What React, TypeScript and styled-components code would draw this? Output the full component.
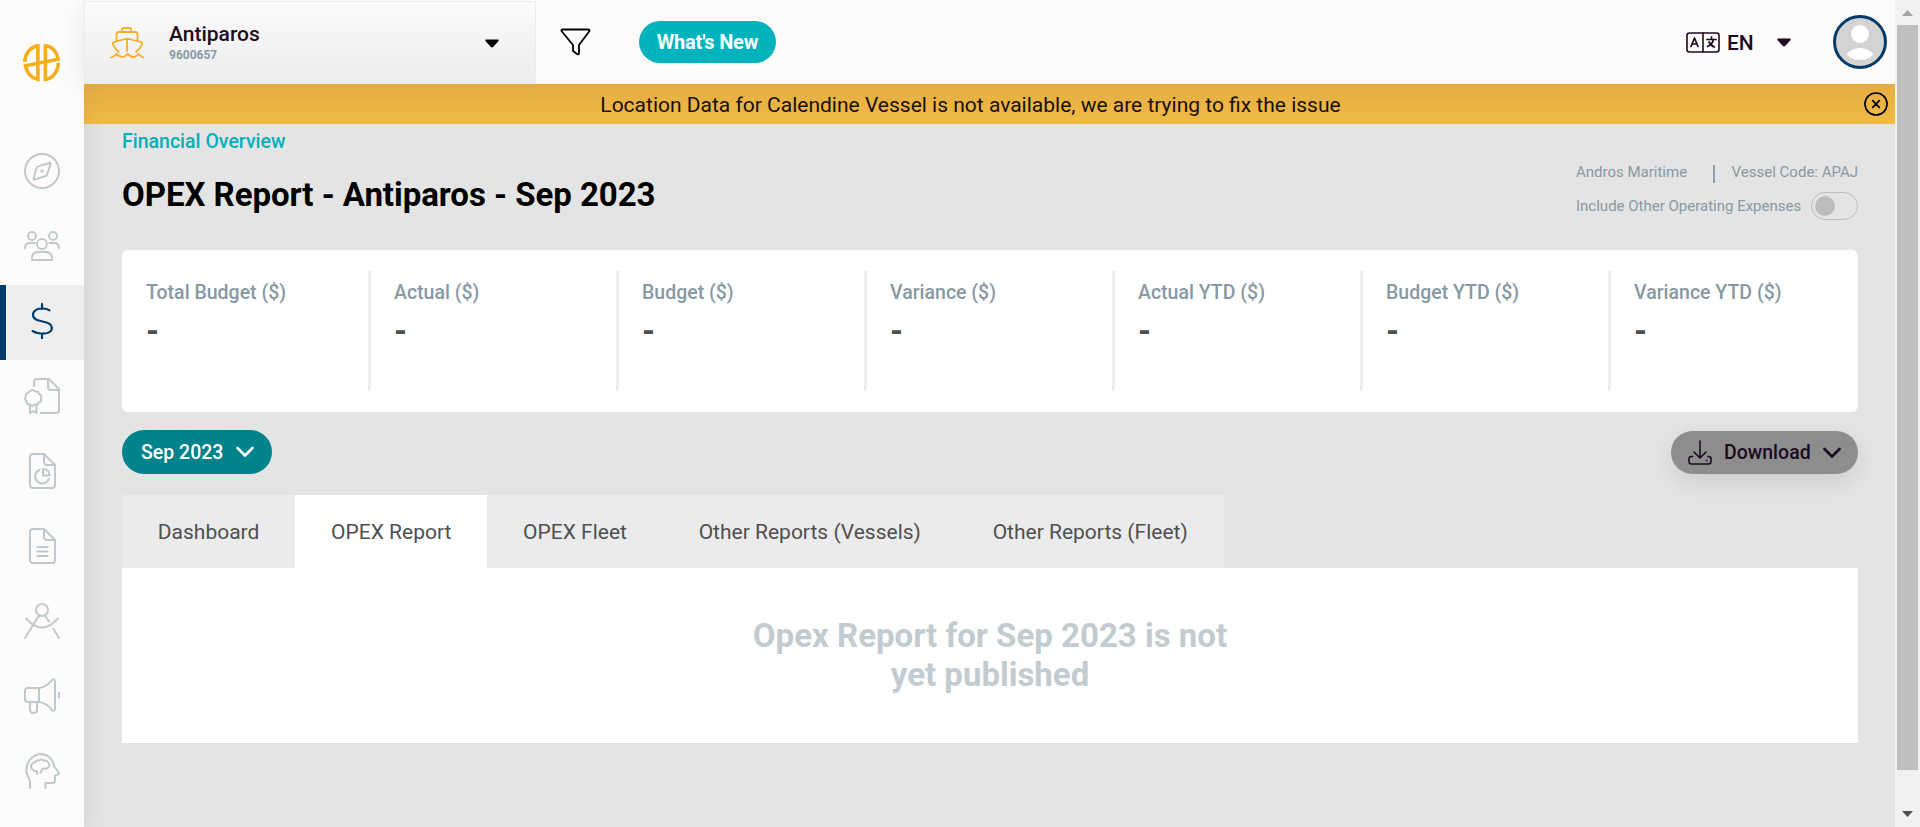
import React from 'react';
import styled, { createGlobalStyle } from 'styled-components';

const GlobalStyle = createGlobalStyle`
  *, *::before, *::after { box-sizing: border-box; }
  body { margin: 0; background: #e4e4e4; overflow: hidden; }
  body, button { font-family: Roboto, "Liberation Sans", sans-serif; }
  button { border: 0; padding: 0; background: none; cursor: pointer; white-space: nowrap; }
  h1, h2, p { margin: 0; }
  svg { display: block; flex: none; }
`;

const Shell = styled.div`
  display: grid;
  grid-template-columns: 84px minmax(0, 1fr) 25px;
  height: 100vh;
  overflow: hidden;
`;

const Sidebar = styled.nav`
  position: relative;
  z-index: 2;
  background: #fefcfa;
  box-shadow: 0 0 24px rgba(0, 0, 0, 0.1);
`;

const LogoLink = styled.div`
  display: flex;
  padding: 44px 0 0 23px;
  height: 135px;
`;

const NavItem = styled.div<{ $active?: boolean }>`
  display: flex;
  height: 75px;
  padding: ${(p) => (p.$active ? '18px 0 0 18px' : '18px 0 0 24px')};
  border-left: ${(p) => (p.$active ? '6px solid #003a69' : '0')};
  background: ${(p) => (p.$active ? '#eeeeee' : 'transparent')};
  color: ${(p) => (p.$active ? '#003a69' : '#bfc8cc')};
`;

const Page = styled.div`
  display: flex;
  flex-direction: column;
  min-width: 0;
`;

const Header = styled.header`
  position: relative;
  z-index: 3;
  display: flex;
  align-items: center;
  height: 84px;
  background: #fefcfa;
  box-shadow: 0 4px 24px rgba(0, 0, 0, 0.09);
  clip-path: inset(0 0 -40px -26px);
`;

const VesselSelect = styled.div`
  display: flex;
  align-items: center;
  align-self: flex-end;
  width: 452px;
  height: 83px;
  padding: 0 36px 0 25px;
  border: 1px solid #ebebeb;
  border-bottom: 0;
  background: linear-gradient(#fbfbfb, #ececec);
`;

const VesselText = styled.div`
  flex: 1;
  padding: 0 0 0 24px;
`;

const VesselName = styled.div`
  font-size: 21px;
  line-height: 23px;
  font-weight: 500;
  color: #1c0a22;
`;

const VesselNumber = styled.div`
  margin-top: 1px;
  font-size: 12px;
  line-height: 16px;
  font-weight: 700;
  color: #8799a3;
`;

const FilterButton = styled.button`
  margin-left: 24px;
`;

const NewsButton = styled.button`
  width: 137px;
  height: 42px;
  margin-left: 48px;
  border-radius: 21px;
  background: #00b3bd;
  color: #fff;
  font-size: 20px;
  font-weight: 700;
  letter-spacing: -0.2px;
`;

const Language = styled.div`
  display: flex;
  align-items: center;
  margin-left: auto;
  color: #1c0a22;
  font-size: 21px;
  font-weight: 500;
`;

const LanguageCode = styled.span`
  width: 50px;
  margin-left: 7px;
  padding-top: 1px;
`;

const Avatar = styled.div`
  width: 54px;
  height: 54px;
  margin: 0 8px 0 42px;
  border: 3px solid #003a69;
  border-radius: 50%;
  overflow: hidden;
  background: #d3d3d3;
`;

const Banner = styled.div`
  position: relative;
  z-index: 4;
  display: flex;
  align-items: center;
  height: 40px;
  flex: none;
  padding: 0 7px 0 31px;
  background:
    linear-gradient(90deg, rgba(0, 0, 0, 0.03), transparent 22px),
    linear-gradient(#e3ad41, #edb545 60%, #f1ba46);
`;

const BannerText = styled.p`
  flex: 1;
  padding: 1px 38px 0 0;
  text-align: center;
  font-size: 21px;
  color: #16110a;
`;

const Content = styled.main`
  padding: 0 37px 0 38px;
`;

const Breadcrumb = styled.p`
  padding-top: 6px;
  font-size: 19.5px;
  line-height: 24px;
  color: #00b0b9;
  font-weight: 500;
`;

const TitleRow = styled.div`
  display: flex;
  justify-content: space-between;
  height: 96px;
`;

const Title = styled.h1`
  padding-top: 21px;
  font-size: 33px;
  line-height: 40px;
  font-weight: 700;
  letter-spacing: -0.04px;
  color: #000;
`;

const Meta = styled.div`
  width: 282px;
  padding-top: 7px;
  color: #8799a3;
  font-size: 15px;
`;

const MetaRow = styled.div`
  display: flex;
  align-items: center;
  justify-content: space-between;
  height: 22px;
  white-space: nowrap;
`;

const MetaSeparator = styled.span`
  width: 2px;
  height: 18px;
  margin: 3px -9px 0 0;
  background: #8da0ac;
`;

const ToggleRow = styled(MetaRow)`
  height: 28px;
  margin-top: 9px;
`;

const Toggle = styled.span`
  display: flex;
  align-items: center;
  width: 47px;
  height: 28px;
  padding-left: 3px;
  border: 1px solid #bdbdbd;
  border-radius: 14px;
`;

const Knob = styled.span`
  width: 20px;
  height: 20px;
  border-radius: 50%;
  background: #bdbdbd;
`;

const Summary = styled.section`
  display: flex;
  height: 162px;
  padding: 21px 0 21px 1px;
  border-radius: 6px;
  background: #fff;
`;

const Metric = styled.div`
  flex: 0 0 248px;
  padding: 10px 0 0 23px;
  border-right: 3px solid #eeeeee;
  &:last-child { flex: 1; border-right: 0; }
`;

const MetricLabel = styled.div`
  font-size: 19.5px;
  line-height: 24px;
  font-weight: 500;
  color: #8799a3;
`;

const MetricValue = styled.div`
  margin-top: 7px;
  font-size: 33px;
  line-height: 38px;
  font-weight: 700;
  color: #4f4f4f;
`;

const Actions = styled.div`
  display: flex;
  justify-content: space-between;
  padding-top: 18px;
  height: 83px;
`;

const MonthButton = styled.button`
  display: flex;
  align-items: center;
  justify-content: space-between;
  width: 150px;
  height: 44px;
  padding: 0 18px 0 19px;
  border-radius: 22px;
  background: #00838a;
  color: #fff;
  font-size: 19.5px;
  font-weight: 500;
`;

const DownloadButton = styled.button`
  display: flex;
  align-items: center;
  width: 187px;
  height: 43px;
  margin-top: 1px;
  padding: 0 17px 0 17px;
  border-radius: 22px;
  background: #8d8d8d;
  box-shadow: 0 8px 24px rgba(0, 0, 0, 0.1);
  color: #1c0a22;
  font-size: 19.5px;
  font-weight: 500;
`;

const DownloadLabel = styled.span`
  flex: 1;
  padding-left: 12px;
  text-align: left;
`;

const Tabs = styled.div`
  display: flex;
  width: max-content;
  height: 73px;
`;

const Tab = styled.button<{ $active?: boolean }>`
  padding: 0 35.9px 0 35.8px;
  background: ${(p) => (p.$active ? '#fff' : '#ebebeb')};
  color: #4f4f4f;
  font-size: 21px;
`;

const Panel = styled.section`
  display: flex;
  justify-content: center;
  height: 175px;
  padding-top: 48px;
  background: #fff;
`;

const EmptyMessage = styled.h2`
  width: 500px;
  text-align: center;
  font-size: 33px;
  line-height: 39px;
  font-weight: 700;
  color: #c2cbd0;
`;

const ScrollTrack = styled.div`
  position: relative;
  z-index: 3;
  display: flex;
  flex-direction: column;
  align-items: center;
  padding: 10px 0 10px;
  background: #f1f1f1;
`;

const ScrollThumb = styled.div`
  width: 21px;
  height: 745px;
  margin: 9px 0 41px;
  background: #bfbfbf;
`;

const Line = ({ children, w = 36, h = 36, sw = 2 }: { children: React.ReactNode; w?: number; h?: number; sw?: number }) => (
  <svg width={w} height={h} viewBox={`0 0 ${w} ${h}`} fill="none" stroke="currentColor" strokeWidth={sw} strokeLinecap="round" strokeLinejoin="round">
    {children}
  </svg>
);

const Logo = () => (
  <svg width="38" height="38" viewBox="0 0 38 38" fill="none" stroke="#f6ae1e" strokeWidth="3.6">
    <path d="M1.800 18C2 10 7 3 14.900 1.900V35.500C9 34 4 29 2.400 21.800L35.200 15.200C34 8 29.500 2.600 22.400 1.900V35.500C29.500 34.500 35 28 35.300 18.800" />
  </svg>
);

const Compass = () => (
  <Line>
    <circle cx="18" cy="18" r="17" />
    <path d="M26.200 9.800 14 13.400q-1 .3-1.400 1.400L9.700 25.400q-.3 1.500 1.200 1L21.700 23q1-.4 1.400-1.400l3.300-10.300q.4-1.400-.2-1.500Z" />
    <circle cx="18" cy="18" r=".8" fill="currentColor" />
  </Line>
);

const People = () => (
  <Line sw={1.8}>
    <circle cx="8" cy="8" r="4" />
    <circle cx="29" cy="8" r="4" />
    <circle cx="18" cy="16" r="5" />
    <path d="M1 20.500v-.7Q1 15 6 15h5M35 20.500v-.7Q35 15 30 15h-4.500M8 32v-2.500Q8 24 15 24h6q7 0 7 5.500V32Z" />
  </Line>
);

const Dollar = () => (
  <Line sw={2.1}>
    <path d="M18 1v5M18 31v4.500M25.500 7.300C22 5.300 16 4.800 12.500 6.700 7.500 9.300 8 15 13 17l9.500 2.400c6.500 2 7 8 2 10.200-4.500 2-12 1-16-1.600" />
  </Line>
);

const Certificate = () => (
  <Line>
    <path d="M10 8V4q0-3 3-3h12l10 10v21q0 3-3 3H17M24 1v8q0 3 3 3h8" />
    <path d="m9 12 2.300 1.500 2.700.2 1.200 2.300 2.200 1.600-.4 2.700.3 2.600-2.300 1.500-1.600 2.200-2.700-.1L8.200 28l-2.300-1.500-2.700-.6-.7-2.600L1 21l.8-2.500.3-2.700 2.500-1.100 1.800-2Z" />
    <path d="M6 27.500V35l3.200-2 3.200 2v-7.500" />
  </Line>
);

const FileShape = () => (
  <path d="M19 1H9Q6 1 6 4v28q0 3 3 3h19q3 0 3-3V12L20 1v8q0 3 3 3h8" />
);

const ChartFile = () => (
  <Line>
    <FileShape />
    <path d="M15.500 17a7 7 0 1 0 9.300 8.700M19 16v6.500h6.500Q25.500 16 19 16Z" />
  </Line>
);

const TextFile = () => (
  <Line>
    <FileShape />
    <path d="M12.500 19h12M12.500 23.500h12M12.500 28h12" strokeLinecap="butt" />
  </Line>
);

const Divider = () => (
  <Line>
    <circle cx="18" cy="7" r="6" />
    <path d="M15 12.500 1 35M21 12.500l4 6M29.500 26 35 35M2 15.500q16 18 32 0" />
  </Line>
);

const Megaphone = () => (
  <Line>
    <path d="M15 10H4q-3 0-3 3v8q0 3 3 3h11ZM15 10q8-1 13-8 1-1 2-.6 1 .3 1 1.600v28q0 1.300-1 1.600-1 .3-2-.600-5-7-13-8M6 24v8q0 3 3.500 3t3.500-3v-8M35 14.500v5" />
  </Line>
);

const Mind = () => (
  <Line>
    <path d="M6 35v-5.500Q6 26 3.500 22.500A16 16 0 0 1 16 1q9 0 13 8l1 4 4.500 6q1.200 2-1.500 3l-2 .5V27q0 3-3 3h-6.500v5" />
    <path d="M13 21v-2.700l-3.500-.8Q6 15 7.500 12q1-2.500 3.500-2.700Q12 6.500 15 7.500q3-2 5 .3 3-.8 4 1.700 3 2.200 0 5-1 1.500-4 1l-2 1.200-1.500 3" />
  </Line>
);

const Ship = () => (
  <svg width="35" height="32" viewBox="0 0 35 32" fill="none" stroke="#f3ae27" strokeWidth="1.8" strokeLinecap="round" strokeLinejoin="round">
    <path d="M12 4V2.500Q12 1 13.500 1h6Q21 1 21 2.500V4M6.500 14V7q0-2 2-2h17q2 0 2 2v7M17 12v12M8.500 25Q5 22 3 17.500q-.5-2 1-2.500L17 11.500 31 15q1.500.5 1 2.500-2 4.500-6 7.500" />
    <path d="m1 30.500 2.500-1 3-2.500q4 4 8 2.500l3-2.500q5 4.500 8 2.500l3-2.500q2 2.500 5 3.500" />
  </svg>
);

const Caret = () => (
  <svg width="14" height="9" viewBox="0 0 14 9" fill="currentColor">
    <path d="M.5.500h13Q14 1.600 13 2.700L8.300 7.800Q7 9 5.700 7.800L1 2.700Q0 1.600.5.500Z" />
  </svg>
);

const Funnel = () => (
  <Line w={31} h={28} sw={1.8}>
    <path d="M3 1.500h25q2 0 1.500 1.500l-10.500 14V25q0 1.800-1.600 1.200L13 23V17L1.500 3Q1 1.500 3 1.500Z" />
  </Line>
);

const Translate = () => (
  <Line w={34} h={21} sw={1.6}>
    <rect x="1" y="1" width="32" height="19" rx="2.500" />
    <path d="M17 1v19" />
    <path d="m5 14.500 3.500-8.500 3.500 8.500M6.300 12h4.400M25.500 5v2M21 7.500h9M27.500 7.500q-1 5-6 7M23 10q2 4 5.500 5" strokeWidth="1.700" />
  </Line>
);

const Person = () => (
  <svg width="48" height="48" viewBox="0 0 48 48">
    <circle cx="24" cy="16" r="9" fill="#fff" />
    <path d="M10.500 36.500Q16 30 24 30t13.500 6.500Q32 42 24 42t-13.500-5.500Z" fill="#fff" />
  </svg>
);

const Close = () => (
  <Line w={24} h={24} sw={1.7}>
    <circle cx="12" cy="12" r="11" />
    <path d="m8.700 8.700 6.600 6.600m0-6.600-6.600 6.600" />
  </Line>
);

const Chevron = () => (
  <Line w={18} h={12} sw={2.6}>
    <path d="m1.500 2 7.500 7.500L16.500 2" />
  </Line>
);

const DownloadIcon = () => (
  <Line w={24} h={26} sw={1.6}>
    <path d="M12 1v16M6 12l6 6 6-6M4.500 16.500H3.500Q1 16.500 1 19v2.500Q1 24 3.500 24h17q2.500 0 2.500-2.500V19q0-2.500-2.500-2.500H20" />
    <circle cx="18.800" cy="20.500" r=".3" />
  </Line>
);

const ScrollArrow = ({ down = false }: { down?: boolean }) => (
  <svg width="11" height="6" viewBox="0 0 11 6" fill={down ? '#505050' : '#a3a3a3'}>
    <path d={down ? 'M0 0h11L5.500 6Z' : 'M0 6h11L5.500 0Z'} />
  </svg>
);

const navigation = [Compass, People, Dollar, Certificate, ChartFile, TextFile, Divider, Megaphone, Mind];
const metrics = ['Total Budget ($)', 'Actual ($)', 'Budget ($)', 'Variance ($)', 'Actual YTD ($)', 'Budget YTD ($)', 'Variance YTD ($)'];
const tabs = ['Dashboard', 'OPEX Report', 'OPEX Fleet', 'Other Reports (Vessels)', 'Other Reports (Fleet)'];

export default function App() {
  return (
    <Shell>
      <GlobalStyle />
      <Sidebar>
        <LogoLink><Logo /></LogoLink>
        {navigation.map((Icon, i) => (
          <NavItem key={i} $active={Icon === Dollar}><Icon /></NavItem>
        ))}
      </Sidebar>
      <Page>
        <Header>
          <VesselSelect>
            <Ship />
            <VesselText>
              <VesselName>Antiparos</VesselName>
              <VesselNumber>9600657</VesselNumber>
            </VesselText>
            <Caret />
          </VesselSelect>
          <FilterButton aria-label="Filter"><Funnel /></FilterButton>
          <NewsButton>What's New</NewsButton>
          <Language>
            <Translate />
            <LanguageCode>EN</LanguageCode>
            <Caret />
          </Language>
          <Avatar><Person /></Avatar>
        </Header>
        <Banner>
          <BannerText>Location Data for Calendine Vessel is not available, we are trying to fix the issue</BannerText>
          <Close />
        </Banner>
        <Content>
          <Breadcrumb>Financial Overview</Breadcrumb>
          <TitleRow>
            <Title>OPEX Report - Antiparos - Sep 2023</Title>
            <Meta>
              <MetaRow>
                <span>Andros Maritime</span>
                <MetaSeparator />
                <span>Vessel Code: APAJ</span>
              </MetaRow>
              <ToggleRow>
                <span>Include Other Operating Expenses</span>
                <Toggle><Knob /></Toggle>
              </ToggleRow>
            </Meta>
          </TitleRow>
          <Summary>
            {metrics.map((label) => (
              <Metric key={label}>
                <MetricLabel>{label}</MetricLabel>
                <MetricValue>-</MetricValue>
              </Metric>
            ))}
          </Summary>
          <Actions>
            <MonthButton>Sep 2023<Chevron /></MonthButton>
            <DownloadButton>
              <DownloadIcon />
              <DownloadLabel>Download</DownloadLabel>
              <Chevron />
            </DownloadButton>
          </Actions>
          <Tabs>
            {tabs.map((label) => (
              <Tab key={label} $active={label === 'OPEX Report'}>{label}</Tab>
            ))}
          </Tabs>
          <Panel>
            <EmptyMessage>Opex Report for Sep 2023 is not yet published</EmptyMessage>
          </Panel>
        </Content>
      </Page>
      <ScrollTrack>
        <ScrollArrow />
        <ScrollThumb />
        <ScrollArrow down />
      </ScrollTrack>
    </Shell>
  );
}
